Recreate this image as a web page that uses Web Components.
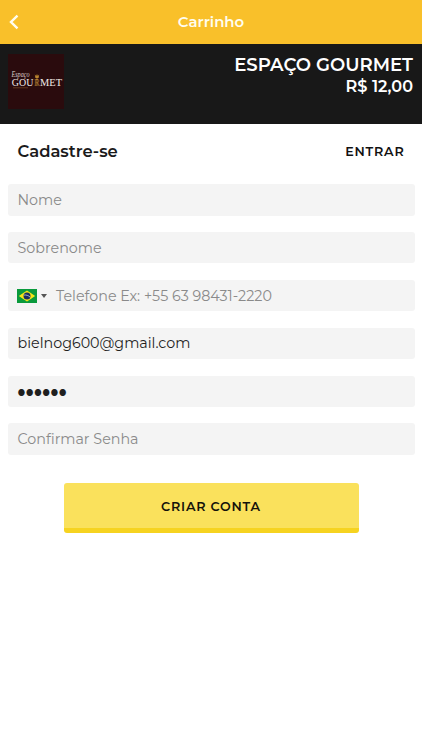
<!DOCTYPE html>
<html lang="pt-BR">
<head>
<meta charset="utf-8">
<meta name="viewport" content="width=device-width, initial-scale=1">
<title>Carrinho</title>
<style>
  body {
    margin: 0;
    background: #fff;
    font-family: Montserrat, Inter, "Open Sans", sans-serif;
    color: #1b1b1b;
  }
</style>
</head>
<body>
<cart-page></cart-page>

<script>
// Top bar with the back arrow and a centered title
class NavBar extends HTMLElement {
  constructor() {
    super();
    this.attachShadow({mode: 'open'});
    this.shadowRoot.innerHTML = `
      <style>
        :host {
          display: grid;
          grid-template-columns: 40px 1fr 40px;
          align-items: center;
          height: 44px;
          background: #f9c02a;
          color: #fffdf0;
        }
        svg { display: block; margin-left: 9px; }
        h1 {
          margin: 0;
          text-align: center;
          font-size: 14.9px;
          font-weight: 600;
        }
      </style>
      <svg width="11" height="16" viewBox="0 0 11 16">
        <path d="M8.5 1.6 2 8l6.5 6.4" fill="none" stroke="#fffdf0" stroke-width="2.4"/>
      </svg>
      <h1><slot></slot></h1>`;
  }
}
customElements.define('nav-bar', NavBar);

// Square restaurant logo
class StoreLogo extends HTMLElement {
  constructor() {
    super();
    this.attachShadow({mode: 'open'});
    this.shadowRoot.innerHTML = `
      <style>
        :host { display: block; width: 56px; height: 55px; background: #2a0b0d; }
        svg { display: block; }
      </style>
      <svg width="56" height="55" viewBox="0 0 56 55">
        <text x="3.5" y="22.5" font-family="'Liberation Serif', serif" font-style="italic" font-size="8" fill="#d8cfcb" textLength="18" lengthAdjust="spacingAndGlyphs">Espaço</text>
        <g font-family="'Liberation Serif', serif" font-size="10.5" fill="#f1eae6">
          <text x="3.8" y="32" textLength="21.5" lengthAdjust="spacingAndGlyphs">GOU</text>
          <text x="26" y="32" fill="#94642c" textLength="6" lengthAdjust="spacingAndGlyphs">R</text>
          <text x="32" y="32" textLength="22" lengthAdjust="spacingAndGlyphs">MET</text>
        </g>
        <path d="M26.8 20.5l1.3 1.5.9-2 .9 2 1.3-1.5-.6 3.6h-3.2z" fill="#b9852f"/>
        <path d="M29 24v8M27.8 25.5h2.4" stroke="#b9852f" stroke-width=".8"/>
        <path d="M5 33.8h15" stroke="#70431f" stroke-width=".8"/>
      </svg>`;
  }
}
customElements.define('store-logo', StoreLogo);

// Dark strip with the logo, the store name and the cart total
class StoreHeader extends HTMLElement {
  constructor() {
    super();
    this.attachShadow({mode: 'open'});
    this.shadowRoot.innerHTML = `
      <style>
        :host {
          display: flex;
          justify-content: space-between;
          box-sizing: border-box;
          height: 80px;
          padding: 10px 9px 0 8px;
          background: #181818;
          color: #fff;
        }
        .info { text-align: right; }
        .name { font-size: 18.1px; font-weight: 600; line-height: 22px; }
        .total { font-size: 16.1px; font-weight: 600; line-height: 20px; }
      </style>
      <store-logo></store-logo>
      <div class="info">
        <div class="name"><slot name="name"></slot></div>
        <div class="total"><slot name="total"></slot></div>
      </div>`;
  }
}
customElements.define('store-header', StoreHeader);

class BrazilFlag extends HTMLElement {
  constructor() {
    super();
    this.attachShadow({mode: 'open'});
    this.shadowRoot.innerHTML = `
      <style>
        :host { display: block; }
        svg { display: block; }
      </style>
      <svg width="20" height="14" viewBox="0 0 20 14">
        <path d="M0 0h20v14H0z" fill="#0a9a3c"/>
        <path d="M10 1.4 18.2 7 10 12.6 1.8 7z" fill="#f5e616"/>
        <circle cx="10" cy="7" r="3.5" fill="#1c2c5e"/>
        <path d="M6.7 6.1c2.4-.4 4.8.3 6.5 2.1" fill="none" stroke="#c5d4dc" stroke-width=".8"/>
      </svg>`;
  }
}
customElements.define('brazil-flag', BrazilFlag);

/**
 * One gray row of the form.
 * Attributes: filled   - the row holds a value, not a placeholder
 *             phone    - shows the country selector
 *             password - the value is a row of dots
 */
class FormField extends HTMLElement {
  constructor() {
    super();
    this.attachShadow({mode: 'open'});
    this.shadowRoot.innerHTML = `
      <style>
        :host {
          display: flex;
          align-items: center;
          box-sizing: border-box;
          height: 31.5px;
          padding: 0 10px;
          border-radius: 3px;
          background: #f4f4f4;
          color: #8a8a8a;
          font-size: 14.3px;
          white-space: nowrap;
        }
        :host([filled]) { color: #1f1f1f; }
        :host([password]) {
          padding-top: 3px;
          font-size: 8.6px;
          letter-spacing: 0.4px;
        }
        .country { display: none; }
        :host([phone]) .country {
          display: flex;
          align-items: center;
          gap: 4px;
          width: 39px;
          margin-left: -0.5px;
        }
        .arrow {
          border: 3px solid transparent;
          border-top: 4px solid #555;
          border-bottom: 0;
        }
      </style>
      <div class="country">
        <brazil-flag></brazil-flag>
        <span class="arrow"></span>
      </div>
      <slot></slot>`;
  }
}
customElements.define('form-field', FormField);

class MainButton extends HTMLElement {
  constructor() {
    super();
    this.attachShadow({mode: 'open'});
    this.shadowRoot.innerHTML = `
      <style>
        :host { display: flex; }
        button {
          flex: 1;
          height: 50px;
          padding: 1px 0 0;
          border: 0;
          border-bottom: 5px solid #f6d320;
          border-radius: 3px;
          background: #fae15c;
          color: #14120a;
          font: inherit;
          font-size: 12.7px;
          font-weight: 600;
          letter-spacing: 0.8px;
        }
      </style>
      <button type="button"><slot></slot></button>`;
  }
}
customElements.define('main-button', MainButton);

class CartPage extends HTMLElement {
  constructor() {
    super();
    this.attachShadow({mode: 'open'});
    this.shadowRoot.innerHTML = `
      <style>
        :host { display: block; height: 750px; overflow: hidden; }
        .heading {
          display: flex;
          align-items: center;
          justify-content: space-between;
          height: 54px;
          padding: 0 17.5px;
        }
        h2 { margin: 0; font-size: 16.4px; font-weight: 600; }
        .login { font-size: 12.7px; font-weight: 600; letter-spacing: 0.8px; color: #111; }
        form {
          display: flex;
          flex-direction: column;
          gap: 16.4px;
          padding: 6px 7.5px 0;
        }
        main-button { margin: 11.7px 56px 0; }
      </style>
      <nav-bar>Carrinho</nav-bar>
      <store-header>
        <span slot="name">ESPAÇO GOURMET</span>
        <span slot="total">R$ 12,00</span>
      </store-header>
      <div class="heading">
        <h2>Cadastre-se</h2>
        <span class="login">ENTRAR</span>
      </div>
      <form>
        <form-field><span>Nome</span></form-field>
        <form-field><span>Sobrenome</span></form-field>
        <form-field phone><span>Telefone Ex: +55 63 98431-2220</span></form-field>
        <form-field filled><span>bielnog600@gmail.com</span></form-field>
        <form-field filled password><span>●●●●●●</span></form-field>
        <form-field><span>Confirmar Senha</span></form-field>
        <main-button>CRIAR CONTA</main-button>
      </form>`;
  }
}
customElements.define('cart-page', CartPage);
</script>
</body>
</html>
